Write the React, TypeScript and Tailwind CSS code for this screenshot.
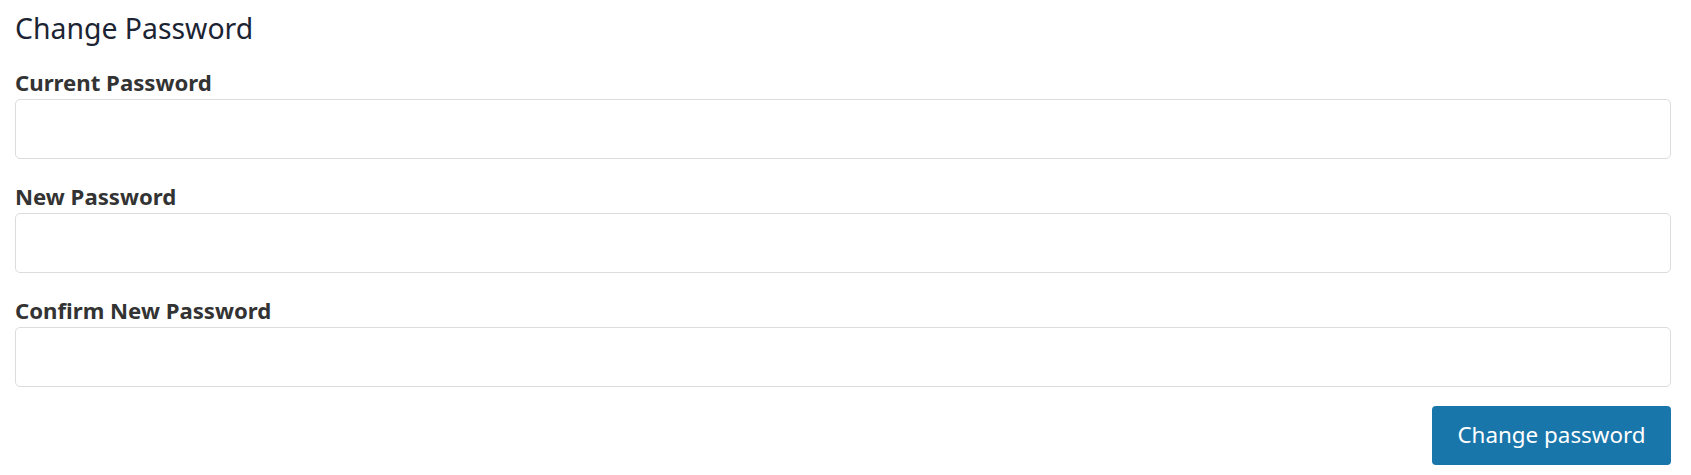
import React, { useState } from 'react';

const font = { fontFamily: '"Segoe UI", "Noto Sans", "Open Sans", sans-serif' };

const fields = [
  { id: 'current', label: 'Current Password' },
  { id: 'new', label: 'New Password' },
  { id: 'confirm', label: 'Confirm New Password' },
];

export default function App() {
  const [values, setValues] = useState<Record<string, string>>({ current: '', new: '', confirm: '' });

  return (
    <div className="bg-white min-h-[475px] pl-[15px] pr-[20px] pt-[10px]" style={font}>
      <h2 className="text-[28.4px] leading-[36px] text-[#1c2433] font-normal">Change Password</h2>

      <form className="mt-[22px] flex flex-col gap-[23px]" onSubmit={(e) => e.preventDefault()}>
        {fields.map((f) => (
          <div key={f.id} className="flex flex-col">
            <label htmlFor={f.id} className="text-[22.2px] leading-[30px] font-bold text-[#333333] mb-[1px]">
              {f.label}
            </label>
            <input
              id={f.id}
              type="password"
              value={values[f.id]}
              onChange={(e) => setValues({ ...values, [f.id]: e.target.value })}
              className="h-[60px] w-full rounded-[5px] border border-[#dcdcdc] bg-white px-3 text-[20px] outline-none focus:border-[#1a77ab]"
            />
          </div>
        ))}

        <div className="flex justify-end -mt-[4px]">
          <button
            type="submit"
            className="h-[59px] w-[239px] rounded-[4px] bg-[#1976ab] text-white text-[22.4px] leading-none"
          >
            Change password
          </button>
        </div>
      </form>
    </div>
  );
}
